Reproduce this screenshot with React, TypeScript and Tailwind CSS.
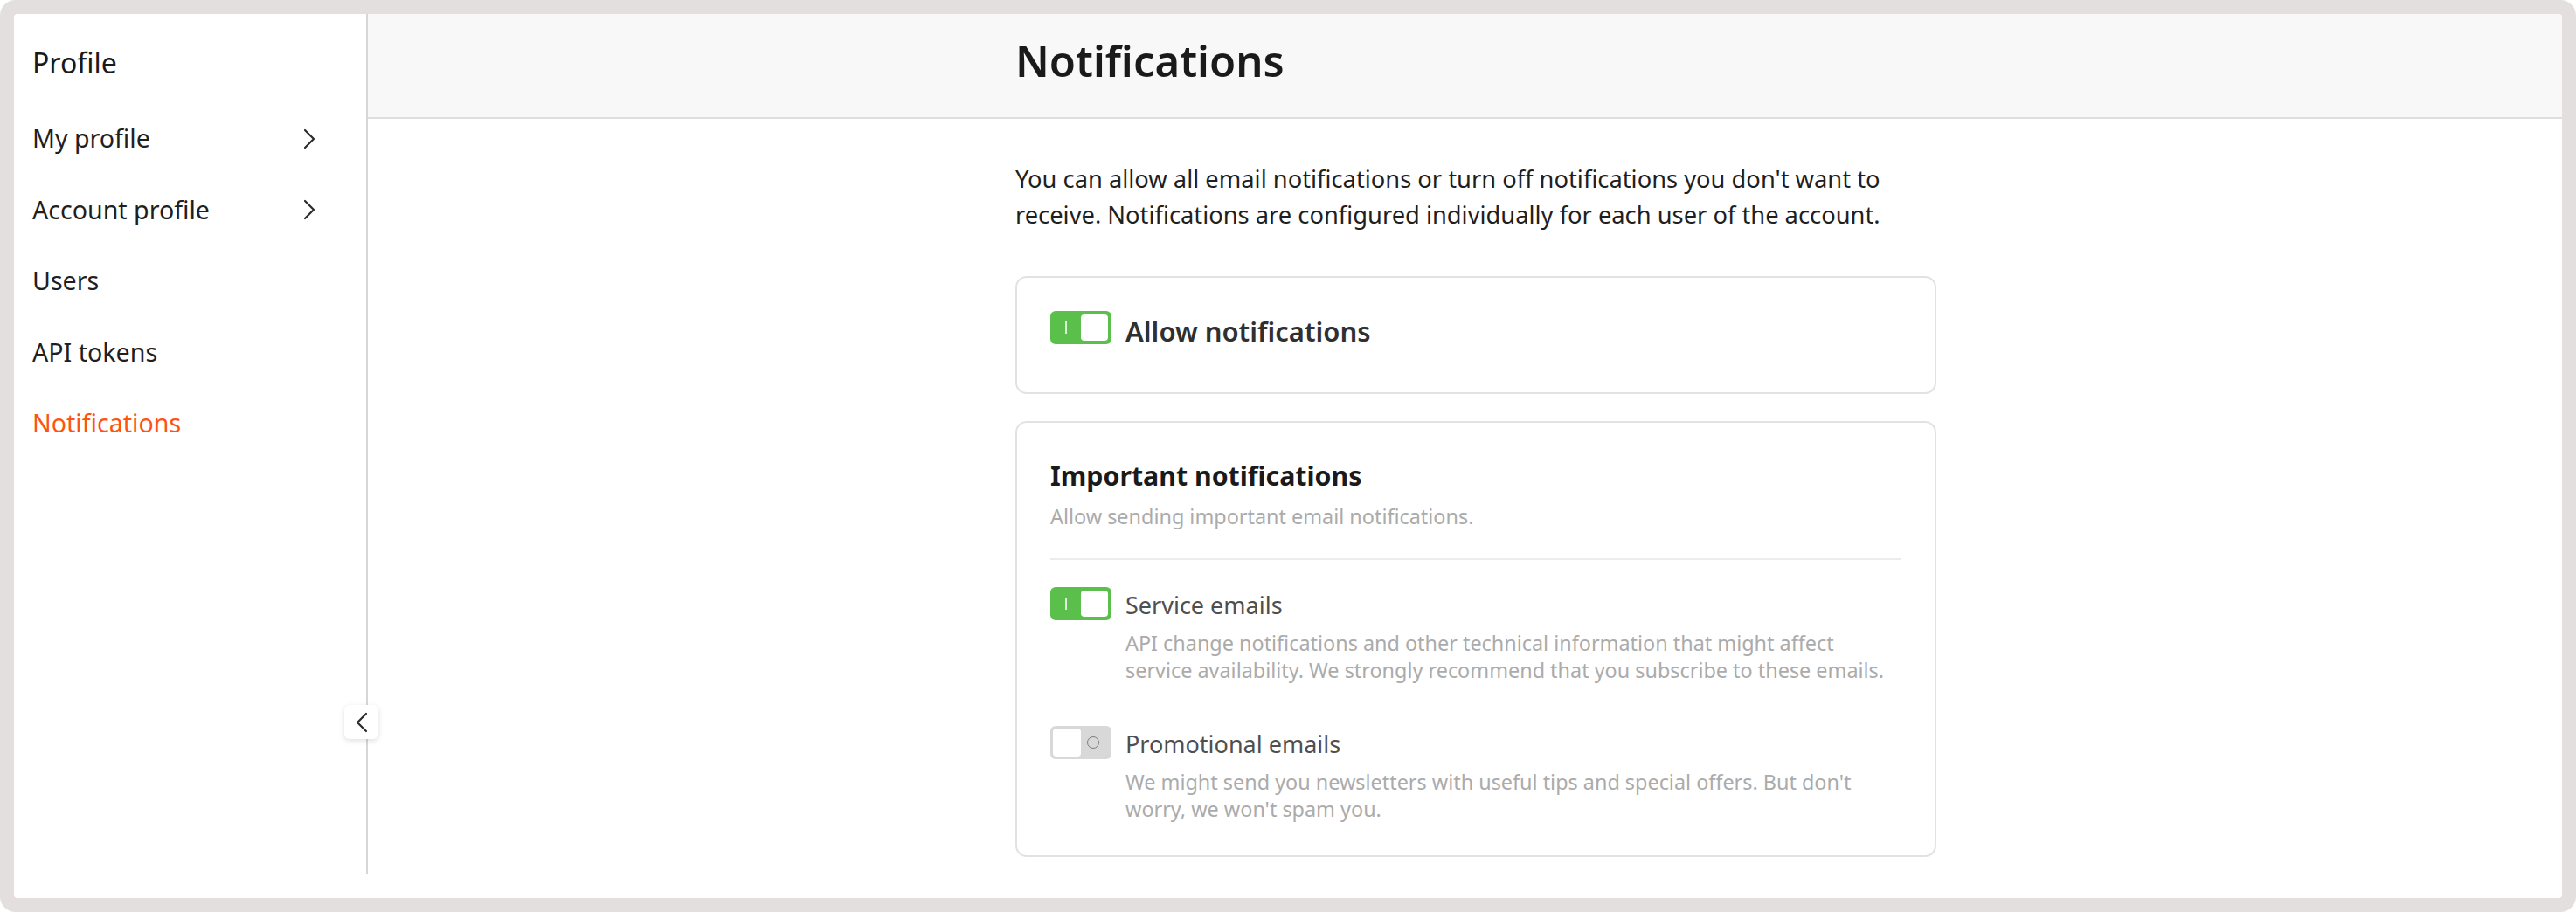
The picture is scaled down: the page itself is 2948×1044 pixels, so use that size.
import type { ReactNode } from "react";

const font = { fontFamily: '"Noto Sans", "Open Sans", sans-serif' };

const Chevron = ({ dir }: { dir: "left" | "right" }) => (
  <svg width="14" height="24" viewBox="0 0 14 24" fill="none">
    <path
      d={dir === "right" ? "M2 2 L12 12 L2 22" : "M12 2 L2 12 L12 22"}
      stroke="#2b2b2b"
      strokeWidth="2.2"
      strokeLinecap="round"
      strokeLinejoin="round"
    />
  </svg>
);

const Toggle = ({ on }: { on: boolean }) =>
  on ? (
    <div className="flex h-[38px] w-[70px] shrink-0 items-center justify-between rounded-[6px] bg-[#5bbf4b] p-[4px]">
      <span className="ml-[13px] h-[14px] w-[2px] bg-white/80" />
      <span className="h-full w-[31px] rounded-[4px] bg-white" />
    </div>
  ) : (
    <div className="flex h-[38px] w-[70px] shrink-0 items-center justify-between rounded-[6px] bg-[#d8d8d8] p-[3px]">
      <span className="h-full w-[32px] rounded-[4px] bg-white" />
      <span className="mr-[11px] h-[14px] w-[14px] rounded-full border-[1.5px] border-[#7c7c7c]" />
    </div>
  );

const NavItem = ({
  label,
  active,
  arrow,
}: {
  label: string;
  active?: boolean;
  arrow?: boolean;
}) => (
  <div className="flex h-[81.5px] items-center justify-between pr-[58px]">
    <span
      className={
        active
          ? "text-[28.6px] text-[#fd5413]"
          : "text-[28.6px] text-[#1f1f1f]"
      }
    >
      {label}
    </span>
    {arrow && <Chevron dir="right" />}
  </div>
);

const Option = ({
  on,
  title,
  children,
}: {
  on: boolean;
  title: string;
  children: ReactNode;
}) => (
  <div>
    <div className="flex items-start gap-4">
      <Toggle on={on} />
      <span className="mt-[2px] text-[27px] leading-[37px] text-[#4f4f4f]">
        {title}
      </span>
    </div>
    <p className="mt-[10px] pl-[86px] text-[23.4px] leading-[31px] text-[#ababab]">
      {children}
    </p>
  </div>
);

const App = () => {
  return (
    <div className="h-[1044px] bg-white" style={font}>
      <div className="h-full rounded-[18px] bg-[#e3dfde] p-4">
        <div className="flex h-full overflow-hidden rounded-[4px] bg-white">
          {/* sidebar */}
          <aside className="relative mb-[28px] w-[405px] shrink-0 border-r-2 border-[#d6d6d6] pl-[21px] pt-[20px]">
            <div className="flex h-[72px] items-center text-[32px] text-[#1a1a1a]">
              Profile
            </div>
            <div className="mt-[10px]">
              <NavItem label="My profile" arrow />
              <NavItem label="Account profile" arrow />
              <NavItem label="Users" />
              <NavItem label="API tokens" />
              <NavItem label="Notifications" active />
            </div>

            <button className="absolute -right-[14px] top-[791px] flex h-[39px] w-[39px] items-center justify-center rounded-[6px] bg-white shadow-[0_2px_6px_rgba(0,0,0,0.13)]">
              <Chevron dir="left" />
            </button>
          </aside>

          {/* main */}
          <main className="flex min-w-0 flex-1 flex-col">
            <header className="flex h-[120px] shrink-0 items-center border-b-2 border-[#dedede] bg-[#f8f8f8] pb-[10px] pl-[25px]">
              <h1 className="mx-auto w-[1054px] text-[49px] font-semibold text-[#1a1a1a]">
                Notifications
              </h1>
            </header>

            <div className="pl-[25px]">
              <div className="mx-auto w-[1054px] pt-[48px]">
                <p className="text-[27.3px] leading-[41px] text-[#1f1f1f]">
                  You can allow all email notifications or turn off
                  notifications you don't want to receive. Notifications are
                  configured individually for each user of the account.
                </p>

                <div className="mt-[50px] h-[135px] rounded-[13px] border-2 border-[#e2e2e2] px-[38px] pt-[38px]">
                  <div className="flex items-start gap-4">
                    <Toggle on />
                    <span className="mt-[2px] text-[31px] font-semibold leading-[42px] text-[#303030]">
                      Allow notifications
                    </span>
                  </div>
                </div>

                <div className="mt-[31px] rounded-[13px] border-2 border-[#e2e2e2] px-[38px] pb-[37px] pt-[41px]">
                  <h2 className="text-[30.3px] font-bold leading-[40px] text-[#1a1a1a]">
                    Important notifications
                  </h2>
                  <p className="mt-[11px] text-[23.4px] leading-[30px] text-[#ababab]">
                    Allow sending important email notifications.
                  </p>
                  <div className="mb-[31px] mt-[33px] h-[2px] bg-[#ececec]" />

                  <Option on title="Service emails">
                    API change notifications and other technical information
                    that might affect
                    <br />
                    service availability. We strongly recommend that you
                    subscribe to these emails.
                  </Option>

                  <div className="h-[48px]" />

                  <Option on={false} title="Promotional emails">
                    We might send you newsletters with useful tips and special
                    offers. But don't
                    <br />
                    worry, we won't spam you.
                  </Option>
                </div>
              </div>
            </div>
          </main>
        </div>
      </div>
    </div>
  );
};

export default App;
